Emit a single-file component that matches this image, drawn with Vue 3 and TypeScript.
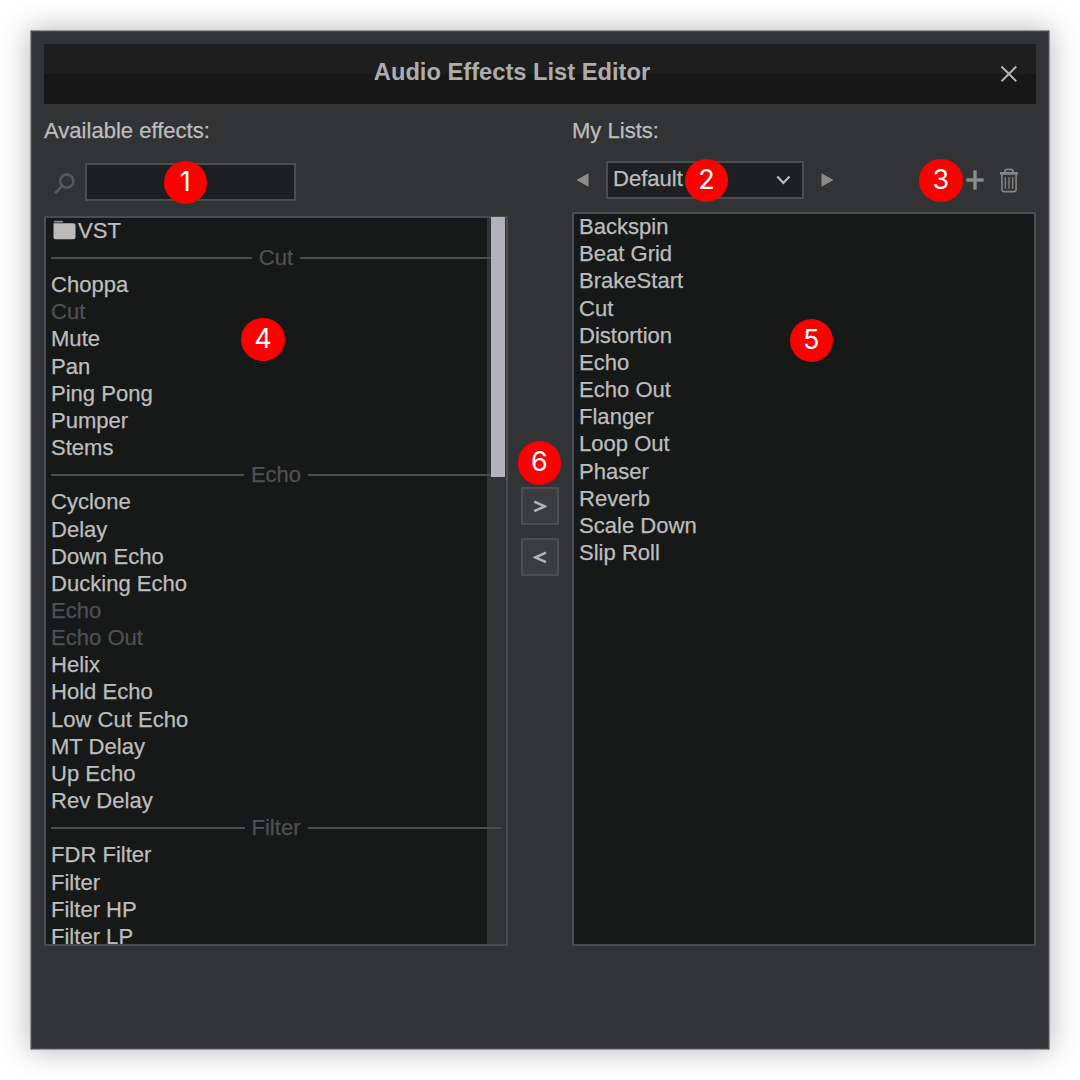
<script setup lang="ts">
interface EffectRow {
  name: string
  kind?: 'folder' | 'group' | 'used'
}

const group = (name: string): EffectRow => ({ name, kind: 'group' })
const used = (name: string): EffectRow => ({ name, kind: 'used' })
const effects = (...names: string[]): EffectRow[] => names.map((name) => ({ name }))

const available: EffectRow[] = [
  { name: 'VST', kind: 'folder' },
  group('Cut'),
  ...effects('Choppa'),
  used('Cut'),
  ...effects('Mute', 'Pan', 'Ping Pong', 'Pumper', 'Stems'),
  group('Echo'),
  ...effects('Cyclone', 'Delay', 'Down Echo', 'Ducking Echo'),
  used('Echo'),
  used('Echo Out'),
  ...effects('Helix', 'Hold Echo', 'Low Cut Echo', 'MT Delay', 'Up Echo', 'Rev Delay'),
  group('Filter'),
  ...effects('FDR Filter', 'Filter', 'Filter HP', 'Filter LP'),
]

const myList: string[] = [
  'Backspin', 'Beat Grid', 'BrakeStart', 'Cut', 'Distortion', 'Echo', 'Echo Out',
  'Flanger', 'Loop Out', 'Phaser', 'Reverb', 'Scale Down', 'Slip Roll',
]
</script>

<template>
  <div class="page">
    <main class="window">
      <header class="titlebar">
        <h1>Audio Effects List Editor</h1>
        <svg class="close" width="18" height="18" viewBox="0 0 18 18">
          <path d="M1.5 1.5 16.3 16.3M16.3 1.5 1.5 16.3" fill="none" stroke="#b4b4b4" stroke-width="2" />
        </svg>
      </header>

      <div class="columns">
        <section class="column">
          <h2>Available effects:</h2>
          <div class="search">
            <svg width="22" height="22" viewBox="0 0 22 22">
              <circle cx="12.8" cy="8" r="6.6" fill="none" stroke="#59595d" stroke-width="2.5" />
              <path d="M8.2 12.7 1.1 20.2" stroke="#59595d" stroke-width="2.6" />
            </svg>
            <div class="field"><span class="badge b1">1</span></div>
          </div>
          <div class="list left">
            <div class="rows">
              <div v-for="(row, i) in available" :key="i" class="row" :class="row.kind">
                <svg v-if="row.kind === 'folder'" width="23" height="20" viewBox="0 0 23 20">
                  <path d="M.8 2.6V2Q.8.8 2 .8H8.5Q9.8.8 10.3 2.2V2.6Z" fill="#8d8b8b" />
                  <path d="M.5 3.3H20.5Q22.5 3.3 22.5 5.3V17.3Q22.5 19.2 20.5 19.2H2.5Q.5 19.2.5 17.3Z" fill="#bababa" />
                </svg>
                <span>{{ row.name }}</span>
              </div>
            </div>
            <div class="track"><div class="thumb"></div></div>
            <span class="badge b4">4</span>
          </div>
        </section>

        <div class="transfer">
          <button type="button">
            <svg width="14" height="14" viewBox="0 0 14 14"><path d="M1.2 2.6 11.8 7.4 1.2 12.2" fill="none" stroke="#b5b5b5" stroke-width="2.5" /></svg>
            <span class="badge b6">6</span>
          </button>
          <button type="button">
            <svg width="14" height="14" viewBox="0 0 14 14"><path d="M13 2.6 2.4 7.4 13 12.2" fill="none" stroke="#b5b5b5" stroke-width="2.5" /></svg>
          </button>
        </div>

        <section class="column">
          <h2>My Lists:</h2>
          <div class="picker">
            <svg width="13" height="14" viewBox="0 0 13 14"><path d="M.4 7 12.5.3V13.7Z" fill="#8b8b8b" /></svg>
            <div class="select">
              <span>Default</span>
              <svg width="15" height="10" viewBox="0 0 15 10"><path d="M1.3 1.5 7.4 7.9 13.5 1.5" fill="none" stroke="#bcbcbc" stroke-width="2.2" /></svg>
              <span class="badge b2">2</span>
            </div>
            <svg width="13" height="14" viewBox="0 0 13 14"><path d="M12.6 7 .5.3V13.7Z" fill="#8b8b8b" /></svg>
            <div class="actions">
              <svg width="18" height="20" viewBox="0 0 18 20"><path d="M9 .3V19.7M.4 10H17.6" stroke="#8c8c8c" stroke-width="3.4" /></svg>
              <svg width="20" height="25" viewBox="0 0 20 25" fill="none" stroke="#868686">
                <path d="M6 4.6V3.4Q6 1.3 8 1.3H12Q14 1.3 14 3.4V4.6" stroke-width="1.7" />
                <path d="M1 5.4H19" stroke-width="2.8" />
                <path d="M2.9 7V21.2Q2.9 23.6 5.2 23.6H14.8Q17.1 23.6 17.1 21.2V7" stroke-width="1.6" />
                <path d="M6.3 9.3V20.8M10 9.3V20.8M13.7 9.3V20.8" stroke-width="1.3" />
              </svg>
              <span class="badge b3">3</span>
            </div>
          </div>
          <div class="list right">
            <div class="rows">
              <div v-for="name in myList" :key="name" class="row">{{ name }}</div>
            </div>
            <span class="badge b5">5</span>
          </div>
        </section>
      </div>
    </main>
  </div>
</template>

<style>
body {
  background: #fff;
}
</style>

<style scoped>
.page {
  box-sizing: border-box;
  width: 1080px;
  height: 1080px;
  padding: 30px;
  overflow: hidden;
  font-family: "Liberation Sans", Arial, sans-serif;
  color: #bdbdbd;
}
.window {
  box-sizing: border-box;
  width: 1020px;
  height: 1020px;
  padding: 13px;
  border: 1px solid #96969a;
  outline: 1px solid #4b4b4f;
  outline-offset: -2px;
  background: #323335;
  box-shadow: 0 0 28px rgba(0, 0, 0, .3);
}
.titlebar {
  position: relative;
  display: flex;
  justify-content: center;
  height: 59.5px;
  background: linear-gradient(#1e1e1e 0 30px, #171717 30px);
}
h1 {
  margin: 0 0 0 -56px;
  font-size: 23.7px;
  line-height: 56px;
  font-weight: 700;
  white-space: nowrap;
  color: #adadad;
}
.close {
  position: absolute;
  right: 18px;
  top: 21px;
}
.columns {
  display: grid;
  grid-template-columns: 464px 64px 464px;
}
.column {
  display: flex;
  flex-direction: column;
  height: 842.5px;
}
h2 {
  margin: 0;
  height: 58px;
  font-size: 22.05px;
  font-weight: 400;
  line-height: 54px;
  -webkit-text-stroke: .25px;
}
.search {
  display: flex;
  align-items: flex-start;
  gap: 9.5px;
  height: 54.5px;
  padding: 1px 0 0 9.5px;
  box-sizing: border-box;
}
.search svg {
  margin-top: 10px;
}
.field,
.select {
  position: relative;
  box-sizing: border-box;
  height: 38px;
  border: 2px solid #4c4d51;
  background: #1e1f21;
}
.field {
  width: 211px;
}
.picker {
  display: flex;
  align-items: flex-start;
  height: 50.5px;
  padding-left: 4px;
}
.picker > svg {
  margin-top: 11.5px;
}
.select {
  display: flex;
  align-items: center;
  justify-content: space-between;
  width: 198px;
  margin: -.5px 17px 0;
  padding: 0 11px 0 5px;
  font-size: 22.05px;
}
.select > span:first-child {
  margin-top: -3px;
  -webkit-text-stroke: .25px;
}
.actions {
  position: relative;
  display: flex;
  align-items: center;
  gap: 15px;
  height: 37.5px;
  margin: 0 17px 0 auto;
}
.list {
  position: relative;
  box-sizing: border-box;
  flex: 1;
  min-height: 0;
  border: 2px solid #4c4d51;
  background: #171918;
}
.rows {
  height: 100%;
  overflow: hidden;
  box-sizing: border-box;
  padding-left: 5px;
}
.left .rows {
  margin-top: -1.2px;
  height: calc(100% + 1.2px);
}
.right .rows {
  margin-top: -.9px;
}
.row {
  height: 27.17px;
  font-size: 22.05px;
  line-height: 27.17px;
  white-space: nowrap;
  -webkit-text-stroke: .25px;
}
.folder {
  display: flex;
  align-items: center;
  padding-left: 2px;
  gap: 2px;
}
.used,
.group {
  color: #505055;
}
.group {
  position: relative;
  z-index: 1;
  display: flex;
  align-items: center;
  gap: 7px;
  width: 450px;
}
.group::before,
.group::after {
  content: "";
  flex: 1;
  height: 2px;
  background: #4c4d51;
}
.track {
  position: absolute;
  top: 0;
  right: 0;
  width: 19px;
  height: 100%;
  background: #323335;
}
.thumb {
  position: relative;
  z-index: 2;
  width: 14px;
  height: 260px;
  margin: -.6px 0 0 3.5px;
  background: #b3b2bc;
}
.transfer {
  display: flex;
  flex-direction: column;
  align-items: center;
  gap: 13px;
  padding-top: 383.5px;
}
button {
  position: relative;
  box-sizing: border-box;
  display: flex;
  align-items: center;
  justify-content: center;
  width: 38px;
  height: 38px;
  padding: 0;
  border: 2px solid #4c4d51;
  background: #3b3c40;
}
.badge {
  position: absolute;
  z-index: 3;
  width: 43.4px;
  height: 43.4px;
  border-radius: 50%;
  background: #fe0000;
  color: #fff;
  font: 400 27px/41px Inter, sans-serif;
  text-align: center;
}
.b1 { left: 76.6px; top: -3.5px; }
.b2 { left: 76.8px; top: -4.2px; }
.b3 { right: 56.4px; top: -2.7px; }
.b4 { left: 195.2px; top: 99.5px; }
.b5 { left: 215.5px; top: 105px; }
.b6 { left: -5.3px; top: -47.8px; }
</style>
